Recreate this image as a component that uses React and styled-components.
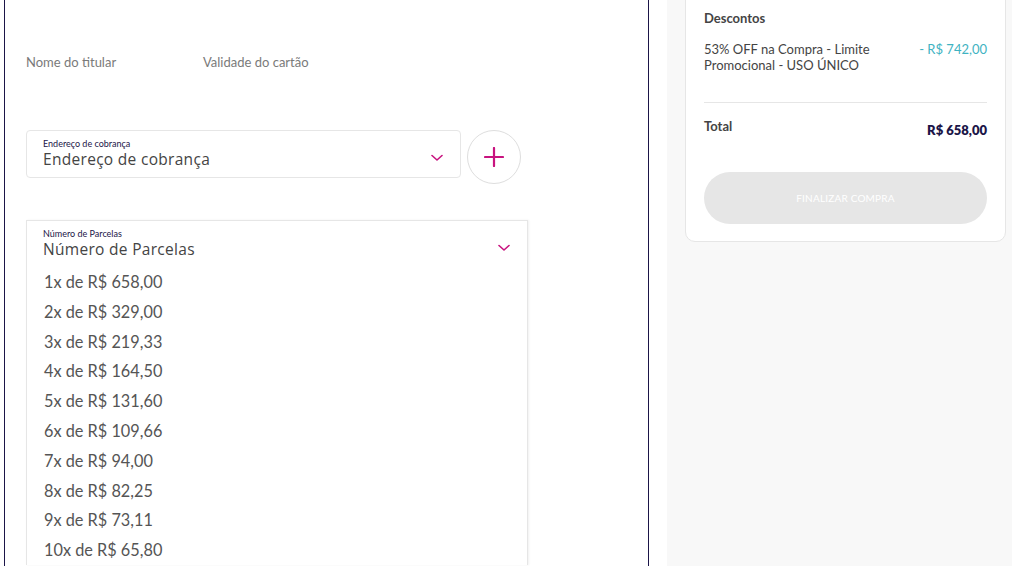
import React from 'react';
import styled, { createGlobalStyle } from 'styled-components';

const GlobalStyle = createGlobalStyle`
  html, body { margin: 0; padding: 0; background: #ffffff; }
  body { font-family: Lato, "Open Sans", sans-serif; overflow: hidden; }
  * { box-sizing: border-box; }
`;

const installments = [
  '1x de R$ 658,00',
  '2x de R$ 329,00',
  '3x de R$ 219,33',
  '4x de R$ 164,50',
  '5x de R$ 131,60',
  '6x de R$ 109,66',
  '7x de R$ 94,00',
  '8x de R$ 82,25',
  '9x de R$ 73,11',
  '10x de R$ 65,80',
];

const Chevron = () => (
  <ChevronWrap>
    <svg width="12" height="8" viewBox="0 0 12 8" fill="none">
      <path d="M1 1.5 L6 6 L11 1.5" stroke="#c8137f" strokeWidth="1.6" strokeLinecap="round" strokeLinejoin="round" />
    </svg>
  </ChevronWrap>
);

const App = () => {
  return (
    <>
      <GlobalStyle />
      <Page>
        <Main>
          <LabelsRow>
            <FieldLabel>Nome do titular</FieldLabel>
            <FieldLabel>Validade do cartão</FieldLabel>
          </LabelsRow>

          <AddressRow>
            <SelectBox width={435} rounded>
              <SelectText>
                <SmallLabel>Endereço de cobrança</SmallLabel>
                <SelectValue>Endereço de cobrança</SelectValue>
              </SelectText>
              <Chevron />
            </SelectBox>
            <AddButton>
              <svg width="20" height="20" viewBox="0 0 20 20">
                <path d="M10 1 V19 M1 10 H19" stroke="#c8137f" strokeWidth="2.2" strokeLinecap="round" />
              </svg>
            </AddButton>
          </AddressRow>

          <Dropdown>
            <DropdownHeader>
              <SelectText>
                <SmallLabel>Número de Parcelas</SmallLabel>
                <SelectValue>Número de Parcelas</SelectValue>
              </SelectText>
              <Chevron />
            </DropdownHeader>
            <OptionList>
              {installments.map((item) => (
                <Option key={item}>{item}</Option>
              ))}
            </OptionList>
          </Dropdown>
        </Main>

        <Gutter />

        <Sidebar>
          <Card>
            <CardTitle>Descontos</CardTitle>
            <DiscountRow>
              <DiscountText>53% OFF na Compra - Limite Promocional - USO ÚNICO</DiscountText>
              <DiscountValue>- R$ 742,00</DiscountValue>
            </DiscountRow>
            <Divider />
            <TotalRow>
              <TotalLabel>Total</TotalLabel>
              <TotalValue>R$ 658,00</TotalValue>
            </TotalRow>
            <FinishButton disabled>FINALIZAR COMPRA</FinishButton>
          </Card>
        </Sidebar>
      </Page>
    </>
  );
};

export default App;

const Page = styled.div`
  display: flex;
  height: 566px;
  width: 1012px;
  overflow: hidden;
  background: #fff;
`;

const Main = styled.div`
  margin-left: 4px;
  width: 645px;
  flex-shrink: 0;
  border-left: 1px solid #1b1548;
  border-right: 1px solid #1b1548;
  padding-left: 21px;
  display: flex;
  flex-direction: column;
`;

const LabelsRow = styled.div`
  display: flex;
  margin-top: 54px;
  height: 17px;
`;

const FieldLabel = styled.div`
  width: 177px;
  font-size: 13px;
  line-height: 17px;
  color: #7a7a7a;
`;

const AddressRow = styled.div`
  display: flex;
  align-items: flex-start;
  gap: 6px;
  margin-top: 59px;
`;

const SelectBox = styled.div`
  width: ${(p) => p.width}px;
  height: 48px;
  border: 1px solid #e6e6e6;
  border-radius: ${(p) => (p.rounded ? '4px' : '0')};
  display: flex;
  align-items: center;
  justify-content: space-between;
  padding: 0 17px 0 16px;
`;

const SelectText = styled.div`
  display: flex;
  flex-direction: column;
  gap: 3px;
  padding-bottom: 3px;
`;

const SmallLabel = styled.span`
  font-size: 9px;
  line-height: 9px;
  color: #1b1548;
`;

const SelectValue = styled.span`
  font-family: "Open Sans", "DejaVu Sans", sans-serif;
  font-size: 15.5px;
  line-height: 16px;
  color: #444;
  letter-spacing: 0.3px;
`;

const ChevronWrap = styled.span`
  display: flex;
  padding-top: 8px;
`;

const AddButton = styled.button`
  width: 54px;
  height: 54px;
  border-radius: 50%;
  border: 1px solid #dedede;
  background: #fff;
  display: flex;
  align-items: center;
  justify-content: center;
  padding: 0;
`;

const Dropdown = styled.div`
  margin-top: 36px;
  width: 502px;
  border: 1px solid #e6e6e6;
  border-bottom: none;
  box-shadow: 1px 0 2px rgba(0, 0, 0, 0.06);
`;

const DropdownHeader = styled.div`
  height: 46px;
  display: flex;
  align-items: center;
  justify-content: space-between;
  padding: 0 17px 0 16px;
`;

const OptionList = styled.ul`
  list-style: none;
  margin: 0;
  padding: 0;
`;

const Option = styled.li`
  height: 29.8px;
  line-height: 29.8px;
  padding-left: 17px;
  font-size: 16.3px;
  color: #555;
`;

const Gutter = styled.div`
  width: 18px;
  flex-shrink: 0;
`;

const Sidebar = styled.aside`
  flex: 1;
  background: #f8f8f8;
  padding: 0 6px 0 18px;
`;

const Card = styled.div`
  margin-top: -20px;
  background: #fff;
  border: 1px solid #e6e6e6;
  border-radius: 10px;
  padding: 29px 18px 17px 18px;
`;

const CardTitle = styled.div`
  font-size: 13px;
  font-weight: 700;
  color: #444;
  line-height: 16px;
`;

const DiscountRow = styled.div`
  display: flex;
  justify-content: space-between;
  align-items: flex-start;
  margin-top: 15px;
`;

const DiscountText = styled.div`
  width: 190px;
  font-size: 13px;
  line-height: 16px;
  color: #444;
`;

const DiscountValue = styled.div`
  font-size: 13px;
  line-height: 16px;
  color: #3fb3c2;
`;

const Divider = styled.hr`
  border: none;
  border-top: 1px solid #e6e6e6;
  margin: 29px 0 0;
`;

const TotalRow = styled.div`
  display: flex;
  justify-content: space-between;
  align-items: flex-start;
  margin-top: 15px;
`;

const TotalLabel = styled.div`
  font-size: 13px;
  font-weight: 700;
  color: #444;
  line-height: 16px;
`;

const TotalValue = styled.div`
  font-size: 13px;
  font-weight: 800;
  color: #1b1548;
  line-height: 16px;
  margin-top: 4px;
`;

const FinishButton = styled.button`
  width: 100%;
  height: 52px;
  margin-top: 34px;
  border: none;
  border-radius: 26px;
  background: #e6e6e6;
  color: #fff;
  font-family: Lato, sans-serif;
  font-size: 10px;
  letter-spacing: 0.2px;
`;
